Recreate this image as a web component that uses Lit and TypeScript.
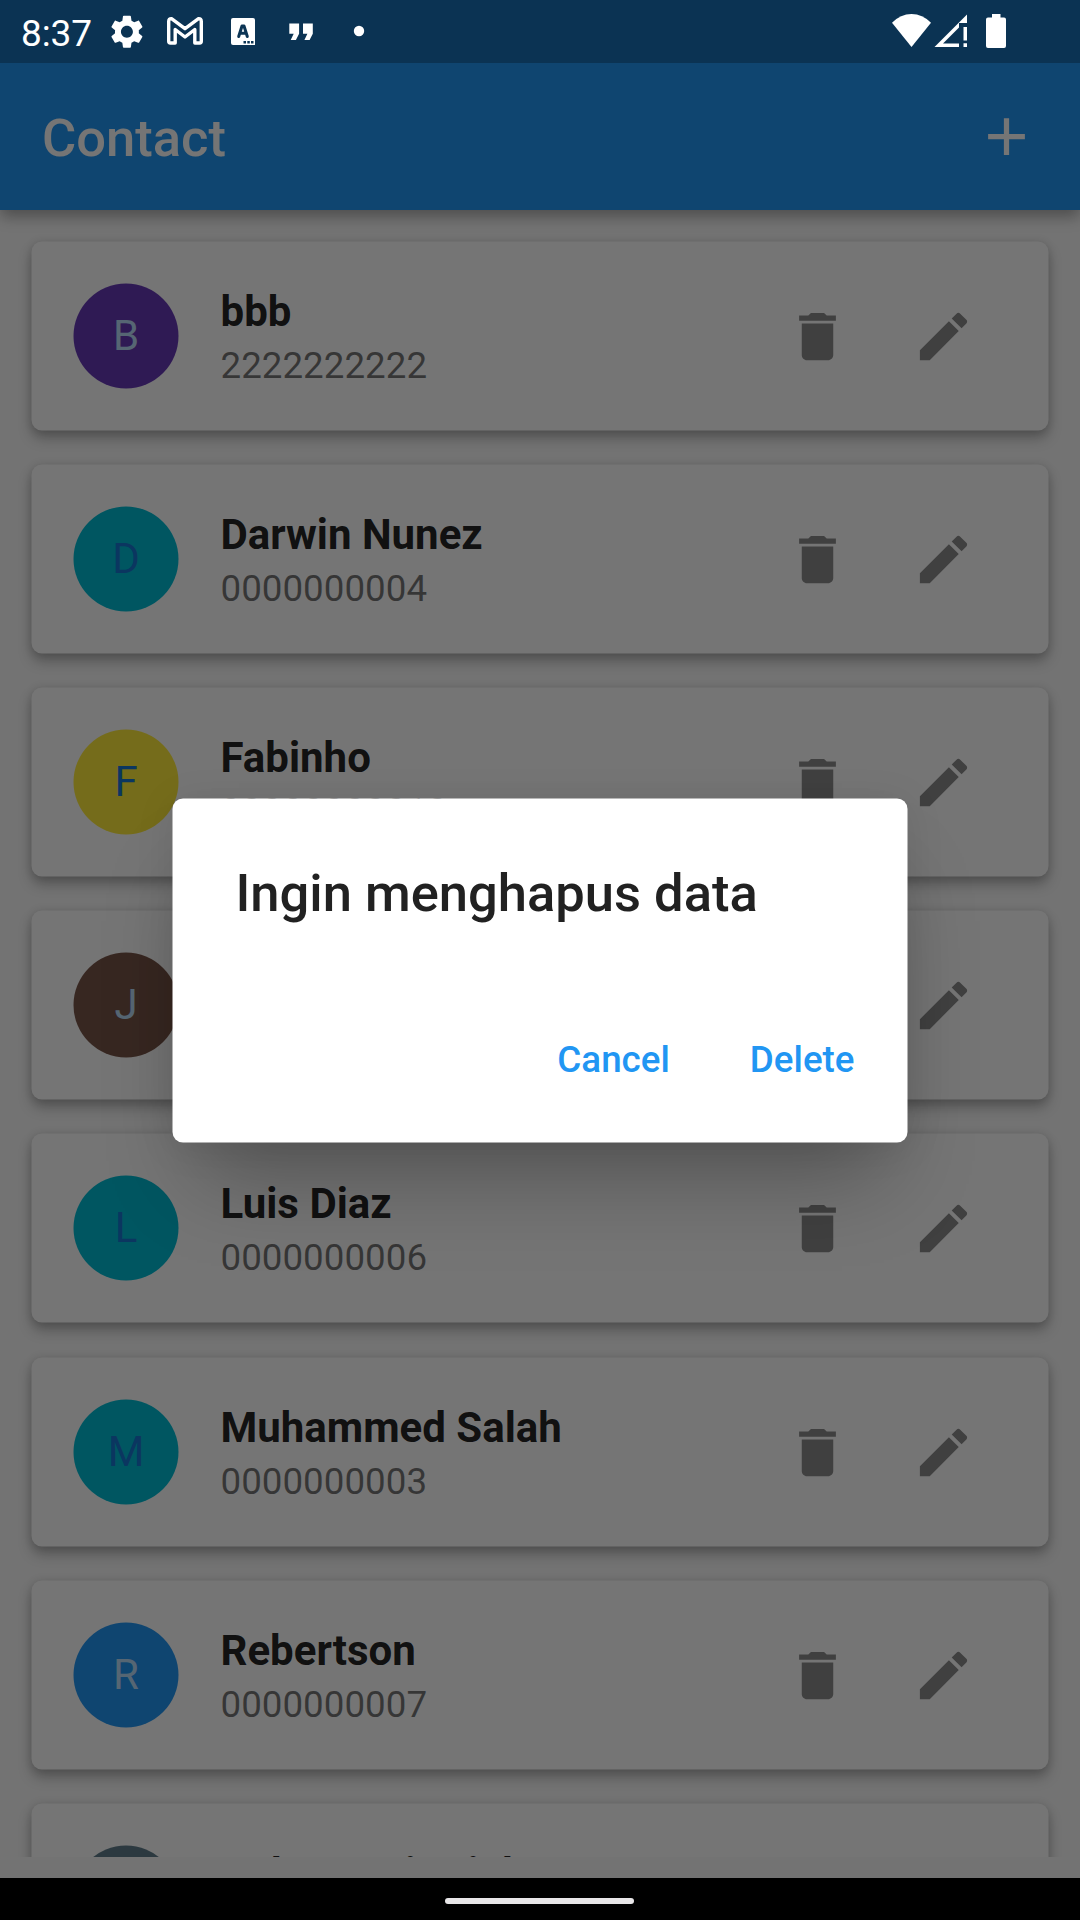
import { LitElement, html, css, svg } from "lit";
import { customElement, property } from "lit/decorators.js";

interface Contact {
  name: string;
  phone: string;
  tone: string;
}

const CONTACTS: Contact[] = [
  { name: "bbb", phone: "2222222222", tone: "purple" },
  { name: "Darwin Nunez", phone: "0000000004", tone: "cyan" },
  { name: "Fabinho", phone: "00000000010", tone: "yellow" },
  { name: "Jota", phone: "0000000005", tone: "brown" },
  { name: "Luis Diaz", phone: "0000000006", tone: "cyan" },
  { name: "Muhammed Salah", phone: "0000000003", tone: "cyan" },
  { name: "Rebertson", phone: "0000000007", tone: "blue" },
  { name: "Roberto Firminho", phone: "0000000009", tone: "grey" },
];

const icon24 = (d: string) => html`<svg class="icon" viewBox="0 0 24 24">${svg`<path d=${d} />`}</svg>`;

const DELETE = "M6 19c0 1.1.9 2 2 2h8c1.1 0 2-.9 2-2V7H6v12zM19 4h-3.5l-1-1h-5l-1 1H5v2h14V4z";
const EDIT =
  "M3 17.25V21h3.75L17.81 9.94l-3.75-3.75L3 17.25zM20.71 7.04c.39-.39.39-1.02 0-1.41l-2.34-2.34c-.39-.39-1.02-.39-1.41 0l-1.83 1.83 3.75 3.75 1.83-1.83z";
const ADD = "M19 13h-6v6h-2v-6H5v-2h6V5h2v6h6v2z";
const GEAR =
  "M19.14 12.94c.04-.3.06-.61.06-.94 0-.32-.02-.64-.07-.94l2.03-1.58c.18-.14.23-.41.12-.61l-1.92-3.32c-.12-.22-.37-.29-.59-.22l-2.39.96c-.5-.38-1.03-.7-1.62-.94l-.36-2.54c-.04-.24-.24-.41-.48-.41h-3.84c-.24 0-.43.17-.47.41l-.36 2.54c-.59.24-1.13.57-1.62.94l-2.39-.96c-.22-.08-.47 0-.59.22L2.74 8.87c-.12.21-.08.47.12.61l2.03 1.58c-.05.3-.09.63-.09.94s.02.64.07.94l-2.03 1.58c-.18.14-.23.41-.12.61l1.92 3.32c.12.22.37.29.59.22l2.39-.96c.5.38 1.03.7 1.62.94l.36 2.54c.05.24.24.41.48.41h3.84c.24 0 .44-.17.47-.41l.36-2.54c.59-.24 1.13-.56 1.62-.94l2.39.96c.22.08.47 0 .59-.22l1.92-3.32c.12-.22.07-.47-.12-.61l-2.01-1.58zM12 15.6c-1.98 0-3.6-1.62-3.6-3.6s1.62-3.6 3.6-3.6 3.6 1.62 3.6 3.6-1.62 3.6-3.6 3.6z";

@customElement("status-bar")
export class StatusBar extends LitElement {
  static styles = css`
    :host {
      display: block;
      color: #fff;
    }
    .bar {
      display: flex;
      justify-content: space-between;
      height: 63px;
    }
    .side {
      display: flex;
    }
    .clock {
      width: 87px;
      padding-left: 21px;
      font-size: 37px;
      line-height: 67px;
      letter-spacing: -0.1px;
    }
    .glyphs {
      display: block;
      height: 63px;
      fill: #fff;
    }
    .line {
      fill: none;
      stroke: #fff;
      stroke-width: 3.4;
      stroke-linejoin: round;
    }
    .ink {
      fill: none;
      stroke: #0b3454;
      stroke-width: 3;
      stroke-linecap: round;
      stroke-linejoin: round;
    }
    .dot {
      fill: #0b3454;
    }
  `;

  render() {
    return html`<div class="bar">
      <div class="side">
        <div class="clock">8:37</div>
        <svg class="glyphs" width="292" viewBox="108 0 292 63">
          <path transform="translate(107 11.8) scale(1.66)" d=${GEAR} />
          <path
            class="line"
            d="M168.700 41.300V21.500Q168.700 18.500 171.500 18.700L185 28.700L198.500 18.700Q201.300 18.500 201.300 21.500V41.300Q201.300 43 199.600 43H194.800V29.500L185 37L175.200 29.500V43H170.400Q168.700 43 168.700 41.300z"
          />
          <path d="M233 18h20q2 0 2 2v25h-22q-2 0-2-2V20q0-2 2-2z" />
          <path class="ink" d="M238.700 36.500L242 26h2L247.300 36.500M240 33.300h6" />
          <path class="dot" d="M243.500 41h2.500v2.500h-2.500zM247.300 41h2.500v2.500h-2.500zM251 41h2.500v2.500H251z" />
          <path d="M289.300 23.500h9.800v10.200l-3.200 6.300h-5.200l3-6.300h-4.400zM303 23.500h9.800v10.200l-3.200 6.300h-5.200l3-6.300H303z" />
          <circle cx="359" cy="31" r="5.200" />
        </svg>
      </div>
      <svg class="glyphs" width="200" viewBox="880 0 200 63">
        <path d="M892 22.800Q900.500 14 911.500 14T931 22.800L911.500 47z" />
        <path fill-rule="evenodd" d="M934.500 47L967 14.500V23h-8v4.500L943 43.500h16V47z" />
        <path d="M963.500 27h3.500v13.500h-3.500zM963.500 43.300h3.500V47h-3.500z" />
        <path d="M992 14h8.500v3.500h3.500q2 0 2 2V46q0 2-2 2h-16q-2 0-2-2V19.500q0-2 2-2h4z" />
      </svg>
    </div>`;
  }
}

@customElement("contact-card")
export class ContactCard extends LitElement {
  @property({ attribute: false }) contact!: Contact;

  static styles = css`
    :host {
      display: block;
    }
    .card {
      box-sizing: border-box;
      display: flex;
      align-items: center;
      height: 189px;
      padding: 0 42px;
      border-radius: 10.5px;
      background: #fff;
      transform: translate(0.5px, 0.5px);
      box-shadow:
        0 8px 14px -1px rgba(0, 0, 0, 0.27),
        0 1px 10px rgba(0, 0, 0, 0.12);
    }
    .avatar {
      width: 105px;
      height: 105px;
      border-radius: 50%;
      margin-right: 42px;
      font-size: 42px;
      line-height: 103px;
      text-align: center;
      color: #bbdefb;
    }
    .purple {
      background: #673ab7;
    }
    .cyan {
      background: #00bcd4;
      color: #1976d2;
    }
    .yellow {
      background: #ffeb3b;
      color: #1976d2;
    }
    .brown {
      background: #795548;
    }
    .blue {
      background: #2196f3;
    }
    .grey {
      background: #607d8b;
    }
    .text {
      flex: 1;
      white-space: nowrap;
      padding-top: 3px;
    }
    .name {
      font-size: 42px;
      font-weight: 700;
      line-height: 56px;
      color: rgba(0, 0, 0, 0.87);
    }
    .phone {
      font-size: 36.75px;
      line-height: 52px;
      color: rgba(0, 0, 0, 0.54);
    }
    .action {
      display: grid;
      place-items: center;
      width: 126px;
      height: 126px;
    }
    .icon {
      display: block;
      width: 63px;
      height: 63px;
      fill: rgba(0, 0, 0, 0.45);
      transform: translate(-0.5px, 0.5px);
    }
  `;

  render() {
    const c = this.contact;
    return html`<div class="card">
      <div class="avatar ${c.tone}">${c.name[0].toUpperCase()}</div>
      <div class="text">
        <div class="name">${c.name}</div>
        <div class="phone">${c.phone}</div>
      </div>
      <div class="action">${icon24(DELETE)}</div>
      <div class="action">${icon24(EDIT)}</div>
    </div>`;
  }
}

@customElement("confirm-dialog")
export class ConfirmDialog extends LitElement {
  static styles = css`
    :host {
      display: block;
    }
    .dialog {
      box-sizing: border-box;
      display: flex;
      flex-direction: column;
      justify-content: space-between;
      width: 735px;
      height: 344px;
      padding: 62.5px 53px 51.5px 63px;
      border-radius: 10.5px;
      background: #fff;
      transform: translate(0.5px, 0.5px);
      box-shadow:
        0 56px 84px -24px rgba(0, 0, 0, 0.29),
        0 4px 40px rgba(0, 0, 0, 0.08);
    }
    .title {
      font-size: 52.5px;
      font-weight: 500;
      line-height: 62px;
      color: #212121;
      white-space: nowrap;
    }
    .actions {
      display: flex;
      justify-content: flex-end;
      gap: 80px;
      font-size: 36.75px;
      font-weight: 500;
      line-height: 64px;
      color: #2196f3;
    }
  `;

  render() {
    return html`<div class="dialog">
      <div class="title">Ingin menghapus data</div>
      <div class="actions"><span>Cancel</span><span>Delete</span></div>
    </div>`;
  }
}

@customElement("app-root")
export class AppRoot extends LitElement {
  static styles = css`
    :host {
      display: block;
      font-family: Roboto, sans-serif;
    }
    .screen {
      position: relative;
      display: flex;
      flex-direction: column;
      width: 1080px;
      height: 1920px;
      overflow: hidden;
      background: #fafafa;
    }
    .appbar {
      position: relative;
      z-index: 1;
      background: #2196f3;
      box-shadow:
        0 8px 14px -1px rgba(0, 0, 0, 0.25),
        0 2px 16px rgba(0, 0, 0, 0.12);
    }
    .inset {
      height: 63px;
      background: rgba(0, 0, 0, 0.25);
    }
    .toolbar {
      display: flex;
      align-items: center;
      justify-content: space-between;
      height: 147px;
      padding: 0 42px;
      color: #fff;
    }
    .title {
      font-size: 52.5px;
      font-weight: 500;
      line-height: 62px;
      padding-top: 2px;
    }
    .icon {
      display: block;
      width: 63px;
      height: 63px;
      fill: #fff;
    }
    .list {
      flex: 1;
      overflow: hidden;
      display: flex;
      flex-direction: column;
      gap: 34.11px;
      padding: 31px 32px 0 31px;
    }
    .list > * {
      flex: none;
    }
    .gap {
      flex: none;
      height: 21px;
    }
    .nav {
      position: relative;
      z-index: 3;
      flex: none;
      display: grid;
      place-items: center;
      height: 42px;
      background: #000;
    }
    .handle {
      width: 189px;
      height: 6px;
      border-radius: 3px;
      background: #e8e6e8;
      margin: 4px 1px 0 0;
    }
    .barrier {
      position: absolute;
      inset: 0;
      z-index: 2;
      display: flex;
      flex-direction: column;
      background: rgba(0, 0, 0, 0.54);
    }
    .center {
      flex: 1;
      display: grid;
      place-items: center;
      padding: 0 1px 43px 0;
    }
  `;

  render() {
    return html`<div class="screen">
      <header class="appbar">
        <div class="inset"></div>
        <div class="toolbar">
          <div class="title">Contact</div>
          ${icon24(ADD)}
        </div>
      </header>
      <main class="list">${CONTACTS.map((c) => html`<contact-card .contact=${c}></contact-card>`)}</main>
      <div class="gap"></div>
      <div class="nav"><div class="handle"></div></div>
      <div class="barrier">
        <status-bar></status-bar>
        <div class="center"><confirm-dialog></confirm-dialog></div>
      </div>
    </div>`;
  }
}
